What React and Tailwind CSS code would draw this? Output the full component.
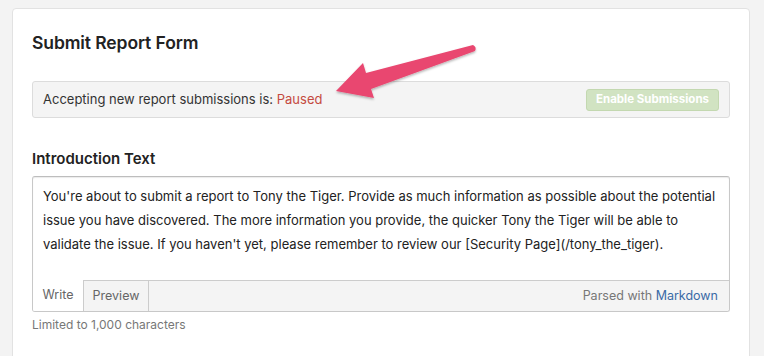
import React from 'react'

function Arrow() {
  return (
    <svg
      className="absolute left-0 top-0 pointer-events-none"
      width="764"
      height="356"
      viewBox="0 0 764 356"
    >
      <defs>
        <filter id="arrowShadow" x="-10%" y="-10%" width="120%" height="130%">
          <feDropShadow dx="0" dy="1.5" stdDeviation="1" floodColor="#000" floodOpacity="0.3" />
        </filter>
      </defs>
      <path
        d="M336 91 L363 63 L366 73 L473 45 Q477 47 475 51 L371 89 L374 98 Z"
        fill="#e9466f"
        filter="url(#arrowShadow)"
      />
    </svg>
  )
}

export default function App() {
  return (
    <div
      className="relative w-[764px] h-[356px] overflow-hidden bg-[#f3f3f3] pt-2 pl-3 pr-[14px] text-[#222]"
      style={{ fontFamily: 'Inter, "Noto Sans", sans-serif' }}
    >
      {/* Card */}
      <div className="h-[360px] bg-white border border-[#e2e2e2] rounded-[4px] px-[19px] pt-[24px]">
        <h2 className="text-[17.5px] font-semibold leading-[20px] tracking-[-0.1px]">Submit Report Form</h2>

        {/* Status bar */}
        <div className="mt-[28px] h-[37px] flex items-center justify-between bg-[#f4f4f4] border border-[#dcdcdc] rounded-[3px] pl-[10px] pr-[10px]">
          <span className="text-[13px] text-[#333]">
            Accepting new report submissions is: <span className="text-[#c44a3f]">Paused</span>
          </span>
          <button className="h-[22px] px-[9px] rounded-[3px] bg-[#d1e3c2] border border-[#c3d8b0] text-white text-[11.5px] font-bold">
            Enable Submissions
          </button>
        </div>

        <h3 className="mt-[32px] text-[15px] font-semibold leading-[18px]">Introduction Text</h3>

        {/* Editor */}
        <div className="mt-[8px] border border-[#c8c8c8] border-t-[#bdbdbd] rounded-[3px] shadow-[inset_0_1px_1px_rgba(0,0,0,0.08)] overflow-hidden">
          <div className="h-[103px] px-[10px] pt-[7px] text-[13px] leading-[24px] text-[#222] whitespace-nowrap">
            You're about to submit a report to Tony the Tiger. Provide as much information as possible about the potential
            <br />
            issue you have discovered. The more information you provide, the quicker Tony the Tiger will be able to
            <br />
            validate the issue. If you haven't yet, please remember to review our [Security Page](/tony_the_tiger).
          </div>
          <div className="h-[31px] flex items-stretch bg-[#f4f4f4] border-t border-[#cccccc] text-[12.5px]">
            <div className="w-[50px] bg-white flex items-center justify-center text-[#666] -mt-px">Write</div>
            <div className="w-[66px] flex items-center justify-center border-l border-r border-[#cccccc] text-[#666]">
              Preview
            </div>
            <div className="flex-1 flex items-center justify-end pr-[11px] text-[#777]">
              Parsed with&nbsp;<span className="text-[#3a6aa6]">Markdown</span>
            </div>
          </div>
        </div>

        <p className="mt-[4px] text-[12px] text-[#777]">Limited to 1,000 characters</p>
      </div>

      <Arrow />
    </div>
  )
}
